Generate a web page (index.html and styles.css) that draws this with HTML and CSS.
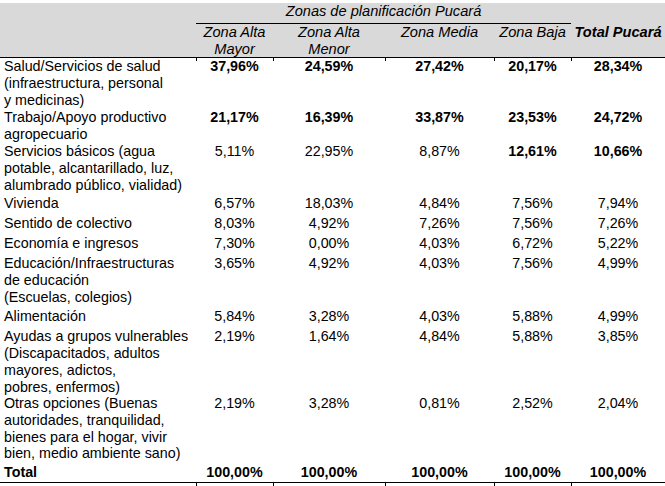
FILE: index.html
```html
<!DOCTYPE html>
<html lang="es">
<head>
<meta charset="utf-8">
<title>Zonas de planificación Pucará</title>
<link rel="stylesheet" href="styles.css">
</head>
<body>
<div class="top-strip"></div>
<table class="tbl">
  <colgroup>
    <col class="c-label">
    <col class="c-amay">
    <col class="c-amen">
    <col class="c-media">
    <col class="c-baja">
    <col class="c-total">
  </colgroup>
  <thead>
    <tr class="hr1">
      <th class="h-blank" rowspan="2"></th>
      <th class="h-group" colspan="4">Zonas de planificación Pucará</th>
      <th class="h-empty"></th>
    </tr>
    <tr class="hr2">
      <th class="h-col">Zona Alta<br>Mayor</th>
      <th class="h-col">Zona Alta<br>Menor</th>
      <th class="h-col">Zona Media</th>
      <th class="h-col">Zona Baja</th>
      <th class="h-col h-strong">Total Pucará</th>
    </tr>
  </thead>
  <tbody>
    <tr class="r51 first">
      <td class="lbl">Salud/Servicios de salud<br>(infraestructura, personal<br>y medicinas)</td>
      <td class="b">37,96%</td><td class="b">24,59%</td><td class="b">27,42%</td><td class="b">20,17%</td><td class="b">28,34%</td>
    </tr>
    <tr class="r34">
      <td class="lbl">Trabajo/Apoyo productivo<br>agropecuario</td>
      <td class="b">21,17%</td><td class="b">16,39%</td><td class="b">33,87%</td><td class="b">23,53%</td><td class="b">24,72%</td>
    </tr>
    <tr class="r52">
      <td class="lbl">Servicios básicos (agua<br>potable, alcantarillado, luz,<br>alumbrado público, vialidad)</td>
      <td>5,11%</td><td>22,95%</td><td>8,87%</td><td class="b">12,61%</td><td class="b">10,66%</td>
    </tr>
    <tr class="r20">
      <td class="lbl">Vivienda</td>
      <td>6,57%</td><td>18,03%</td><td>4,84%</td><td>7,56%</td><td>7,94%</td>
    </tr>
    <tr class="r20">
      <td class="lbl">Sentido de colectivo</td>
      <td>8,03%</td><td>4,92%</td><td>7,26%</td><td>7,56%</td><td>7,26%</td>
    </tr>
    <tr class="r20">
      <td class="lbl">Economía e ingresos</td>
      <td>7,30%</td><td>0,00%</td><td>4,03%</td><td>6,72%</td><td>5,22%</td>
    </tr>
    <tr class="r53">
      <td class="lbl">Educación/Infraestructuras<br>de educación<br>(Escuelas, colegios)</td>
      <td>3,65%</td><td>4,92%</td><td>4,03%</td><td>7,56%</td><td>4,99%</td>
    </tr>
    <tr class="r20">
      <td class="lbl">Alimentación</td>
      <td>5,84%</td><td>3,28%</td><td>4,03%</td><td>5,88%</td><td>4,99%</td>
    </tr>
    <tr class="r66">
      <td class="lbl">Ayudas a grupos vulnerables<br>(Discapacitados, adultos<br>mayores, adictos,<br>pobres, enfermos)</td>
      <td>2,19%</td><td>1,64%</td><td>4,84%</td><td>5,88%</td><td>3,85%</td>
    </tr>
    <tr class="r69">
      <td class="lbl">Otras opciones (Buenas<br>autoridades, tranquilidad,<br>bienes para el hogar, vivir<br>bien, medio ambiente sano)</td>
      <td>2,19%</td><td>3,28%</td><td>0,81%</td><td>2,52%</td><td>2,04%</td>
    </tr>
    <tr class="r19 total">
      <td class="lbl b">Total</td>
      <td class="b">100,00%</td><td class="b">100,00%</td><td class="b">100,00%</td><td class="b">100,00%</td><td class="b">100,00%</td>
    </tr>
    <tr class="ticks">
      <td></td><td></td><td></td><td></td><td></td><td></td>
    </tr>
  </tbody>
</table>
</body>
</html>
```
FILE: styles.css
```css
html, body {
  margin: 0;
  padding: 0;
  background: #ffffff;
}

body {
  width: 665px;
  height: 486px;
  overflow: hidden;
  font-family: "Liberation Sans", Arial, sans-serif;
  color: #000000;
}

.top-strip {
  height: 3px;
  background: #ffffff;
}

.tbl {
  width: 665px;
  table-layout: fixed;
  border-collapse: separate;
  border-spacing: 0;
  font-size: 14.3px;
  line-height: 16.7px;
}

.c-label { width: 196px; }
.c-amay  { width: 77px; }
.c-amen  { width: 112px; }
.c-media { width: 109px; }
.c-baja  { width: 77px; }
.c-total { width: 94px; }

.tbl th,
.tbl td {
  padding: 0;
  vertical-align: top;
}

/* header */
.tbl thead th {
  background: #d9d9d9;
  font-style: italic;
  font-weight: normal;
  font-size: 14.6px;
  text-align: center;
}

.hr1 { height: 21px; }
.hr2 { height: 34px; }

.h-blank {
  border-bottom: 1px solid #000;
}

.h-group {
  border-bottom: 1px solid #000;
  padding-top: 0;
}

.h-col {
  border-bottom: 1px solid #000;
  white-space: nowrap;
}

.tbl thead th.h-strong {
  font-weight: bold;
}

/* body */
.tbl td {
  text-align: center;
  white-space: nowrap;
}

.tbl td.lbl {
  text-align: left;
  padding-left: 4px;
}

.b { font-weight: bold; }

.r19 { height: 19px; }
.r20 { height: 20px; }
.r34 { height: 34px; }
.r51 { height: 51px; }
.r52 { height: 52px; }
.r53 { height: 53px; }
.r66 { height: 66px; }
.r69 { height: 69px; }

.total td {
  border-bottom: 1px solid #000;
}

/* small column ticks below the rules */
.first td:not(:first-child),
.ticks td:not(:first-child) {
  background-image: linear-gradient(#000, #000);
  background-size: 1px 3px;
  background-repeat: no-repeat;
  background-position: left top;
}

.ticks { height: 4px; }
.ticks td { height: 4px; line-height: 0; font-size: 0; }
```
